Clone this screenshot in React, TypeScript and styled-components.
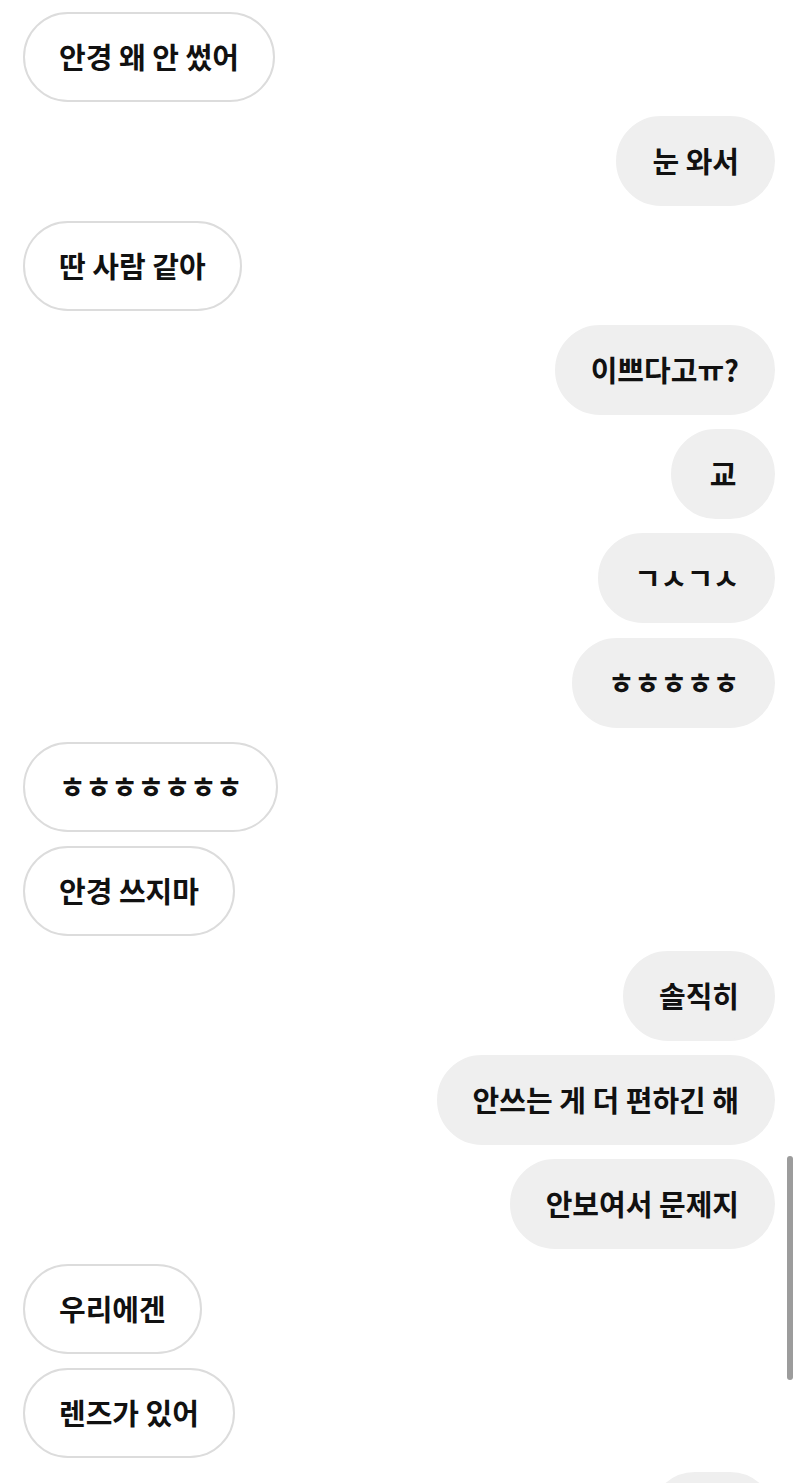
import React from 'react';
import styled, { createGlobalStyle } from 'styled-components';

const GlobalStyle = createGlobalStyle`
    html, body {
        margin: 0;
        padding: 0;
        background: #ffffff;
        overflow: hidden;
    }
    body {
        font-family: "Noto Sans CJK KR", "Noto Sans", sans-serif;
    }
`

type Message = {
    text: string;
    mine: boolean;
    jamo?: boolean;
}

const messages: Message[] = [
    { text: '안경 왜 안 썼어', mine: false },
    { text: '눈 와서', mine: true },
    { text: '딴 사람 같아', mine: false },
    { text: '이쁘다고ㅠ?', mine: true },
    { text: '교', mine: true },
    { text: 'ㄱㅅㄱㅅ', mine: true, jamo: true },
    { text: 'ㅎㅎㅎㅎㅎ', mine: true, jamo: true },
    { text: 'ㅎㅎㅎㅎㅎㅎㅎ', mine: false, jamo: true },
    { text: '안경 쓰지마', mine: false },
    { text: '솔직히', mine: true },
    { text: '안쓰는 게 더 편하긴 해', mine: true },
    { text: '안보여서 문제지', mine: true },
    { text: '우리에겐', mine: false },
    { text: '렌즈가 있어', mine: false },
    { text: 'ㅋㅋ', mine: true },
];

const Screen = styled.div`
    position: relative;
    width: 800px;
    height: 1483px;
    overflow: hidden;
`

const Thread = styled.div`
    display: flex;
    flex-direction: column;
    gap: 14.3px;
    padding: 12px 25px 0 23px;
`

const Row = styled.div<{ $mine: boolean }>`
    display: flex;
    justify-content: ${p => (p.$mine ? 'flex-end' : 'flex-start')};
`

const Bubble = styled.div<{ $mine: boolean; $jamo?: boolean }>`
    box-sizing: border-box;
    height: 90px;
    min-width: 104px;
    display: flex;
    align-items: center;
    justify-content: center;
    padding: 0 34px 2px;
    border-radius: 45px;
    background: ${p => (p.$mine ? '#efefef' : '#ffffff')};
    border: 2px solid ${p => (p.$mine ? '#efefef' : '#dcdcdc')};
    color: #111111;
    font-size: 29px;
    font-weight: 600;
    white-space: nowrap;
    letter-spacing: ${p => (p.$jamo ? '-0.5px' : '0')};
`

const ScrollThumb = styled.div`
    position: absolute;
    top: 1156px;
    right: 7px;
    width: 6px;
    height: 224px;
    border-radius: 3px;
    background: #9c9c9c;
`

const App = () => {
    return (
        <Screen>
            <GlobalStyle />
            <Thread>
                {messages.map((m, i) => (
                    <Row key={i} $mine={m.mine}>
                        <Bubble $mine={m.mine} $jamo={m.jamo}>{m.text}</Bubble>
                    </Row>
                ))}
            </Thread>
            <ScrollThumb />
        </Screen>
    );
};

export default App;
